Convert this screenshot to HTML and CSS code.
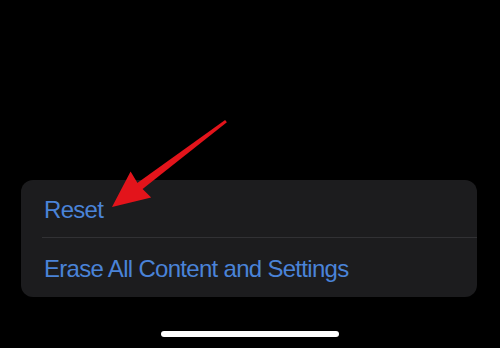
FILE: index.html
```html
<!DOCTYPE html>
<html lang="en">
<head>
<meta charset="utf-8">
<title>Reset</title>
<link rel="stylesheet" href="styles.css">
</head>
<body>
<main class="screen">
  <section class="group">
    <div class="row"><span class="label">Reset</span></div>
    <div class="row row-last"><span class="label">Erase All Content and Settings</span></div>
  </section>
  <div class="home-indicator"></div>
  <svg class="annotation" width="500" height="348" viewBox="0 0 500 348" aria-hidden="true">
    <polygon points="132.4,186.6 225.1,120 226.9,122.2 136.9,193.4" fill="#e3141b"/>
    <polygon points="112,207 130.6,171.6 139,185.5 151.2,197.4" fill="#e3141b"/>
  </svg>
</main>
</body>
</html>
```
FILE: styles.css
```css
* { box-sizing: border-box; }
html, body { margin: 0; padding: 0; background: #000; }
.screen {
  position: relative;
  width: 500px;
  height: 348px;
  overflow: hidden;
  padding: 180px 23px 0 21px;
  display: flex;
  flex-direction: column;
  align-items: flex-start;
  font-family: "Liberation Sans", Arial, sans-serif;
}
.group {
  width: 456px;
  background: #1c1c1e;
  border-radius: 12px;
  display: flex;
  flex-direction: column;
}
.row {
  height: 58px;
  margin-left: 21px;
  display: flex;
  align-items: center;
  border-bottom: 1px solid #313134;
}
.row-last { border-bottom: none; height: 59px; }
.label {
  color: #4a83d8;
  font-size: 24px;
  letter-spacing: -0.7px;
  margin-left: 2px;
  padding-top: 3px;
}
.home-indicator {
  align-self: center;
  margin-top: 34px;
  margin-left: 2px;
  width: 178px;
  height: 6px;
  border-radius: 3px;
  background: #fff;
}
.annotation {
  position: absolute;
  left: 0;
  top: 0;
}
```
